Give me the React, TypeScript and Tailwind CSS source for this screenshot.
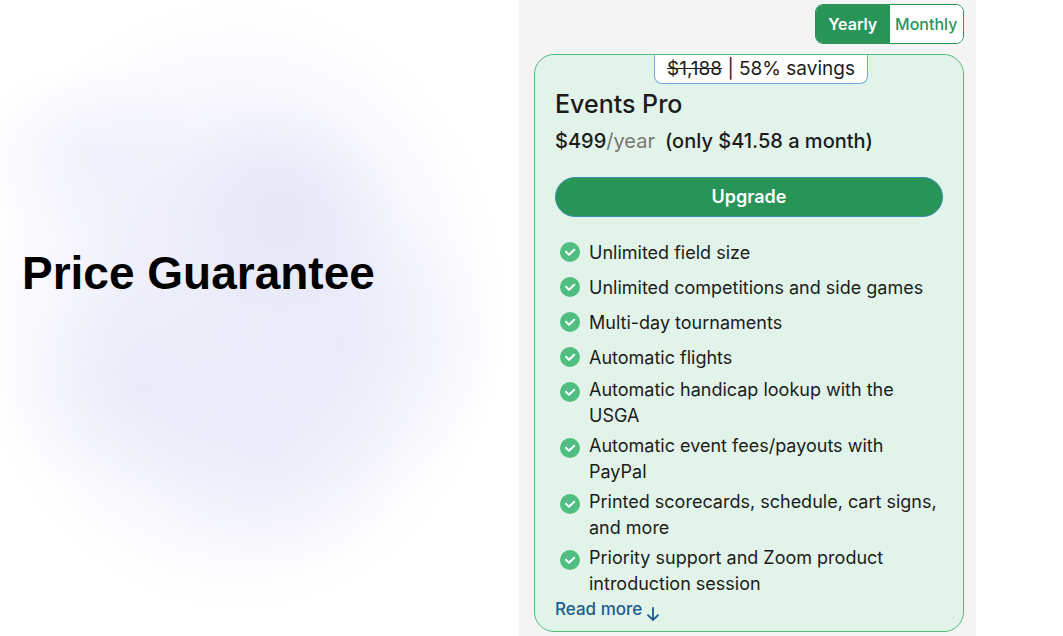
import { useState } from 'react';

const features = [
  'Unlimited field size',
  'Unlimited competitions and side games',
  'Multi-day tournaments',
  'Automatic flights',
  'Automatic handicap lookup with the USGA',
  'Automatic event fees/payouts with PayPal',
  'Printed scorecards, schedule, cart signs, and more',
  'Priority support and Zoom product introduction session',
];

function CheckIcon() {
  return (
    <svg className="mt-[5px] size-5 shrink-0 self-start" viewBox="0 0 20 20" fill="none" aria-hidden="true">
      <circle cx="10" cy="10" r="10" fill="#4fbe80" />
      <path d="M6 9.8l3 2.9 5.2-4.9" stroke="white" strokeWidth="2.1" strokeLinecap="round" strokeLinejoin="round" />
    </svg>
  );
}

function BillingToggle() {
  const [yearly, setYearly] = useState(true);
  const on = 'bg-[#289457] text-white font-semibold';
  const off = 'bg-white text-[#289457] font-medium';

  return (
    <div className="flex h-10 w-[149px] overflow-hidden rounded-lg border border-[#289457] text-base">
      <button type="button" aria-pressed={yearly} onClick={() => setYearly(true)} className={`flex-1 ${yearly ? on : off}`}>
        Yearly
      </button>
      <button type="button" aria-pressed={!yearly} onClick={() => setYearly(false)} className={`flex-1 ${yearly ? off : on}`}>
        Monthly
      </button>
    </div>
  );
}

function PlanCard() {
  return (
    <article className="rounded-[20px] border border-[#4fbe80] bg-[#e2f3e9] px-5 pb-[10px] text-[#1c1c1c]">
      <div className="flex justify-center pl-6">
        <p className="h-[29px] rounded-b-lg border border-t-0 border-[#6fa8d8] bg-white px-3 text-[19px] leading-7">
          <s>$1,188</s> | 58% savings
        </p>
      </div>
      <h2 className="mt-1 text-[25px] leading-8 font-medium">Events Pro</h2>
      <p className="mt-[5px] text-xl leading-8 font-medium">
        $499<span className="font-normal text-[#777777]">/year</span>
        <span className="ml-[10px]">(only $41.58 a month)</span>
      </p>
      <button type="button" className="mt-5 h-10 w-full rounded-full border border-[#3c8fb0] bg-[#289457] text-lg leading-6 font-semibold text-white">
        Upgrade
      </button>
      <ul className="mt-5 flex flex-col gap-1 pl-[5px]">
        {features.map((feature) => (
          <li key={feature} className="flex min-h-[31px] items-center gap-[9px] text-lg leading-[26px]">
            <CheckIcon />
            <span>{feature}</span>
          </li>
        ))}
      </ul>
      <a href="#more" className="flex items-center gap-[5px] text-[17px] leading-6 font-medium text-[#1f5c8f]">
        Read more
        <svg className="mt-[10px] h-[14px] w-3" viewBox="0 0 12 14" fill="none" stroke="currentColor" strokeWidth="1.8" strokeLinecap="round" strokeLinejoin="round" aria-hidden="true">
          <path d="M6 1v12M1 8.2l5 4.8 5-4.8" />
        </svg>
      </a>
    </article>
  );
}

export default function App() {
  return (
    <main className="grid min-h-screen grid-cols-[519fr_457fr_87fr] bg-white">
      {/* soft lavender cloud behind the headline */}
      <section className="flex items-center bg-[radial-gradient(ellipse_120px_110px_at_54%_33%,#dfe2f6a0,transparent),radial-gradient(ellipse_120px_90px_at_17%_24%,#e9eafa80,transparent),radial-gradient(ellipse_140px_110px_at_27%_61%,#e3e5f780,transparent),radial-gradient(ellipse_160px_150px_at_66%_54%,#e3e6f780,transparent),radial-gradient(ellipse_140px_110px_at_51%_72%,#e5e7f880,transparent),radial-gradient(ellipse_270px_310px_at_46%_48%,#ecebf9_0%,#f0f0fb_45%,#fbfbfe_82%,transparent_100%)] pb-[90px] pl-[22px]">
        <h1 className="font-['Liberation_Sans',Arial,sans-serif] text-[46px] leading-none font-bold text-black">Price Guarantee</h1>
      </section>
      <section className="bg-[#f4f4f4] px-3 pt-1 pb-1 pl-[15px] font-['Inter',sans-serif]">
        <div className="mb-[10px] flex justify-end">
          <BillingToggle />
        </div>
        <PlanCard />
      </section>
    </main>
  );
}
